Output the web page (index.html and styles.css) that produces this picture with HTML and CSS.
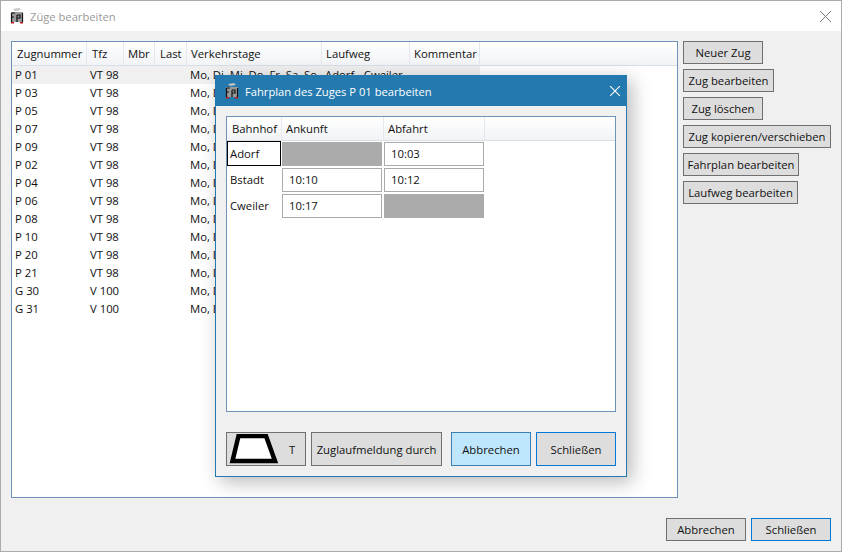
FILE: index.html
```html
<!DOCTYPE html>
<html lang="de">
<head>
<meta charset="utf-8">
<title>Züge bearbeiten</title>
<link rel="stylesheet" href="styles.css">
</head>
<body>

<svg width="0" height="0" class="defs">
	<symbol id="fpl" viewBox="0 0 14 16">
		<path d="M3 1 L9 0 L11 2 L5 3 Z" fill="#c4c4c4"/>
		<rect x="1" y="4" width="12" height="10" fill="#9a9a9a"/>
		<path d="M1.500 5 H5 M1.500 5 V14 M1.500 9 H4 M7 7 V14 M7 7 H10 V10 H7 M12.500 5 V14" stroke="#111" stroke-width="1.200" fill="none"/>
		<rect x="1" y="14" width="3" height="1.500" fill="#c01818"/>
		<rect x="10" y="14" width="3" height="1.500" fill="#c01818"/>
	</symbol>
</svg>

<div class="window">
	<div class="titlebar">
		<svg class="tb-icon"><use href="#fpl"/></svg>
		<span class="tb-title">Züge bearbeiten</span>
		<svg class="tb-close" viewBox="0 0 11 11"><path d="M0 0 L11 11 M11 0 L0 11" stroke="#7a7a7a" stroke-width="1" fill="none"/></svg>
	</div>

	<div class="content">
		<div class="main-row">
			<div class="grid-box">
				<div class="grid-head">
					<div class="hcell c-num">Zugnummer</div>
					<div class="hcell c-tfz">Tfz</div>
					<div class="hcell c-mbr">Mbr</div>
					<div class="hcell c-last">Last</div>
					<div class="hcell c-tage">Verkehrstage</div>
					<div class="hcell c-weg">Laufweg</div>
					<div class="hcell c-komm">Kommentar</div>
					<div class="hcell c-fill"></div>
				</div>
				<div class="grow selected"><div class="c-num">P 01</div><div class="c-tfz">VT 98</div><div class="c-mbr"></div><div class="c-last"></div><div class="c-tage">Mo, Di, Mi, Do, Fr, Sa, So</div><div class="c-weg">Adorf - Cweiler</div></div>
				<div class="grow"><div class="c-num">P 03</div><div class="c-tfz">VT 98</div><div class="c-mbr"></div><div class="c-last"></div><div class="c-tage">Mo, Di</div></div>
				<div class="grow"><div class="c-num">P 05</div><div class="c-tfz">VT 98</div><div class="c-mbr"></div><div class="c-last"></div><div class="c-tage">Mo, Di</div></div>
				<div class="grow"><div class="c-num">P 07</div><div class="c-tfz">VT 98</div><div class="c-mbr"></div><div class="c-last"></div><div class="c-tage">Mo, Di</div></div>
				<div class="grow"><div class="c-num">P 09</div><div class="c-tfz">VT 98</div><div class="c-mbr"></div><div class="c-last"></div><div class="c-tage">Mo, Di</div></div>
				<div class="grow"><div class="c-num">P 02</div><div class="c-tfz">VT 98</div><div class="c-mbr"></div><div class="c-last"></div><div class="c-tage">Mo, Di</div></div>
				<div class="grow"><div class="c-num">P 04</div><div class="c-tfz">VT 98</div><div class="c-mbr"></div><div class="c-last"></div><div class="c-tage">Mo, Di</div></div>
				<div class="grow"><div class="c-num">P 06</div><div class="c-tfz">VT 98</div><div class="c-mbr"></div><div class="c-last"></div><div class="c-tage">Mo, Di</div></div>
				<div class="grow"><div class="c-num">P 08</div><div class="c-tfz">VT 98</div><div class="c-mbr"></div><div class="c-last"></div><div class="c-tage">Mo, Di</div></div>
				<div class="grow"><div class="c-num">P 10</div><div class="c-tfz">VT 98</div><div class="c-mbr"></div><div class="c-last"></div><div class="c-tage">Mo, Di</div></div>
				<div class="grow"><div class="c-num">P 20</div><div class="c-tfz">VT 98</div><div class="c-mbr"></div><div class="c-last"></div><div class="c-tage">Mo, Di</div></div>
				<div class="grow"><div class="c-num">P 21</div><div class="c-tfz">VT 98</div><div class="c-mbr"></div><div class="c-last"></div><div class="c-tage">Mo, Di</div></div>
				<div class="grow"><div class="c-num">G 30</div><div class="c-tfz">V 100</div><div class="c-mbr"></div><div class="c-last"></div><div class="c-tage">Mo, Di</div></div>
				<div class="grow"><div class="c-num">G 31</div><div class="c-tfz">V 100</div><div class="c-mbr"></div><div class="c-last"></div><div class="c-tage">Mo, Di</div></div>
			</div>

			<div class="side">
				<button class="btn w-80">Neuer Zug</button>
				<button class="btn w-91">Zug bearbeiten</button>
				<button class="btn w-80">Zug löschen</button>
				<button class="btn w-148">Zug kopieren/verschieben</button>
				<button class="btn w-116">Fahrplan bearbeiten</button>
				<button class="btn w-115">Laufweg bearbeiten</button>
			</div>
		</div>

		<div class="footer">
			<button class="btn w-80">Abbrechen</button>
			<button class="btn w-80 default">Schließen</button>
		</div>
	</div>
</div>

<div class="dialog">
	<div class="dlg-title">
		<svg class="tb-icon"><use href="#fpl"/></svg>
		<span>Fahrplan des Zuges P 01 bearbeiten</span>
		<svg class="dlg-close" viewBox="0 0 10 10"><path d="M0 0 L10 10 M10 0 L0 10" stroke="#fff" stroke-width="1.100" fill="none"/></svg>
	</div>
	<div class="dlg-body">
		<div class="plan-box">
			<div class="plan-head">
				<div class="phead p-bhf">Bahnhof</div>
				<div class="phead p-an">Ankunft</div>
				<div class="phead p-ab">Abfahrt</div>
				<div class="phead p-fill"></div>
			</div>
			<div class="plan-grid">
				<div class="station current">Adorf</div>
				<div class="tcell off"></div>
				<div class="tcell">10:03</div>
				<div class="station">Bstadt</div>
				<div class="tcell">10:10</div>
				<div class="tcell">10:12</div>
				<div class="station">Cweiler</div>
				<div class="tcell">10:17</div>
				<div class="tcell off"></div>
			</div>
		</div>
		<div class="dlg-buttons">
			<button class="btn shape-btn">
				<svg class="shape" viewBox="0 0 50 30"><path d="M9.500 2 H37 L46 27 H3.500 Z" fill="#fff" stroke="#000" stroke-width="4.500"/></svg>
				<span class="shape-t">T</span>
			</button>
			<button class="btn w-131">Zuglaufmeldung durch</button>
			<button class="btn w-80 tall hover">Abbrechen</button>
			<button class="btn w-80 tall default">Schließen</button>
		</div>
	</div>
</div>

</body>
</html>
```

FILE: styles.css
```css
html,body{
	margin:0;
	padding:0;
	height:100%;
	overflow:hidden;
}
body{
	font-family:"Open Sans","Noto Sans",sans-serif;
	font-size:11.3px;
	color:#111;
}
.defs{
	position:absolute;
}

.window{
	box-sizing:border-box;
	width:842px;
	height:552px;
	border:1px solid #ababab;
	display:flex;
	flex-direction:column;
	background:#f0f0f0;
}
.titlebar{
	height:30px;
	background:#fff;
	display:flex;
	align-items:center;
	padding-left:9px;
	flex:none;
}
.tb-icon{
	width:14px;
	height:16px;
	flex:none;
}
.tb-title{
	margin-left:6px;
	color:#9a9a9a;
	font-size:11.2px;
}
.tb-close{
	width:11px;
	height:11px;
	margin-left:auto;
	margin-right:10px;
}

.content{
	flex:1;
	display:flex;
	flex-direction:column;
	padding:10px 10px 10px 10px;
}
.main-row{
	display:flex;
	height:457px;
	gap:5px;
	flex:none;
}

.grid-box{
	box-sizing:border-box;
	width:667px;
	height:457px;
	border:1px solid #6f93b8;
	background:#fff;
}
.grid-head{
	display:flex;
	height:24px;
}
.hcell{
	box-sizing:border-box;
	height:24px;
	line-height:23px;
	padding-left:4px;
	background:linear-gradient(#fff,#f1f3f6);
	border-right:1px solid #e4e8ee;
	border-bottom:1px solid #d8dfe6;
	white-space:nowrap;
}
.hcell.c-tfz,.hcell.c-num,.hcell.c-last{
	padding-left:5px;
}
.c-fill{
	flex:1;
	border-right:none;
}
.c-num{width:75px;}
.c-tfz{width:37px;}
.c-mbr{width:31px;}
.c-last{width:32px;}
.c-tage{width:135px;}
.c-weg{width:88px;}
.c-komm{width:70px;}

.grow{
	display:flex;
	width:468px;
	height:18px;
	line-height:18px;
	white-space:nowrap;
}
.grow div{
	box-sizing:border-box;
	padding-left:3px;
	overflow:hidden;
}
.selected{
	background:#f0f0f0;
}

.side{
	display:flex;
	flex-direction:column;
	align-items:flex-start;
	gap:5px;
}
.btn{
	box-sizing:border-box;
	height:23px;
	padding:0;
	border:1px solid #707070;
	background:#dddddd;
	font-family:inherit;
	font-size:11.3px;
	color:#111;
	white-space:nowrap;
}
.w-80{width:80px;}
.w-91{width:91px;}
.w-115{width:115px;}
.w-116{width:116px;}
.w-131{width:131px;height:34px;}
.w-148{width:148px;}
.tall{height:34px;}
.default{
	border-color:#0078d7;
}
.hover{
	background:#bee6fd;
	border-color:#3c7fb1;
}

.footer{
	display:flex;
	justify-content:flex-end;
	gap:5px;
	margin-top:20px;
}

/* dialog lies over the main window */
.dialog{
	position:absolute;
	left:215px;
	top:75px;
	box-sizing:border-box;
	width:412px;
	height:402px;
	border:1px solid #2479ae;
	background:#f0f0f0;
	box-shadow:5px 5px 18px rgba(0,0,0,0.28);
	display:flex;
	flex-direction:column;
}
.dlg-title{
	height:30px;
	flex:none;
	background:#2479ae;
	color:#fff;
	font-size:11.2px;
	display:flex;
	align-items:center;
	padding-left:9px;
	gap:6px;
}
.dlg-close{
	width:10px;
	height:10px;
	margin-left:auto;
	margin-right:6px;
}
.dlg-body{
	flex:1;
	display:flex;
	flex-direction:column;
	padding:10px 10px 10px 10px;
}
.plan-box{
	box-sizing:border-box;
	height:296px;
	border:1px solid #6f93b8;
	background:#fff;
}
.plan-head{
	display:flex;
	height:24px;
}
.phead{
	box-sizing:border-box;
	height:24px;
	line-height:23px;
	padding-left:4px;
	background:linear-gradient(#fff,#f1f3f6);
	border-right:1px solid #e4e8ee;
	border-bottom:1px solid #d8dfe6;
}
.p-bhf{width:55px;padding-left:5px;}
.p-an{width:102px;}
.p-ab{width:101px;}
.p-fill{flex:1;border-right:none;}

.plan-grid{
	display:grid;
	grid-template-columns:55px 102px 100px;
	grid-auto-rows:24px;
	row-gap:2px;
	padding-top:1px;
}
.station{
	padding-left:3px;
	line-height:23px;
}
.current{
	box-sizing:border-box;
	border:1px solid #000;
	height:25px;
	margin-top:-1px;
	margin-right:1px;
	padding-left:2px;
}
.tcell{
	box-sizing:border-box;
	width:100px;
	border:1px solid #ababab;
	background:#fff;
	padding-left:6px;
	line-height:22px;
}
.off{
	background:#ababab;
}

.dlg-buttons{
	display:flex;
	margin-top:20px;
}
.shape-btn{
	width:80px;
	height:34px;
	display:flex;
	align-items:center;
	padding:0;
	margin-right:5px;
}
.shape{
	width:50px;
	height:30px;
	margin-left:2px;
	flex:none;
}
.shape-t{
	margin-left:10px;
}
.dlg-buttons .w-131{
	margin-right:9px;
}
.dlg-buttons .default{
	margin-left:5px;
}
```
